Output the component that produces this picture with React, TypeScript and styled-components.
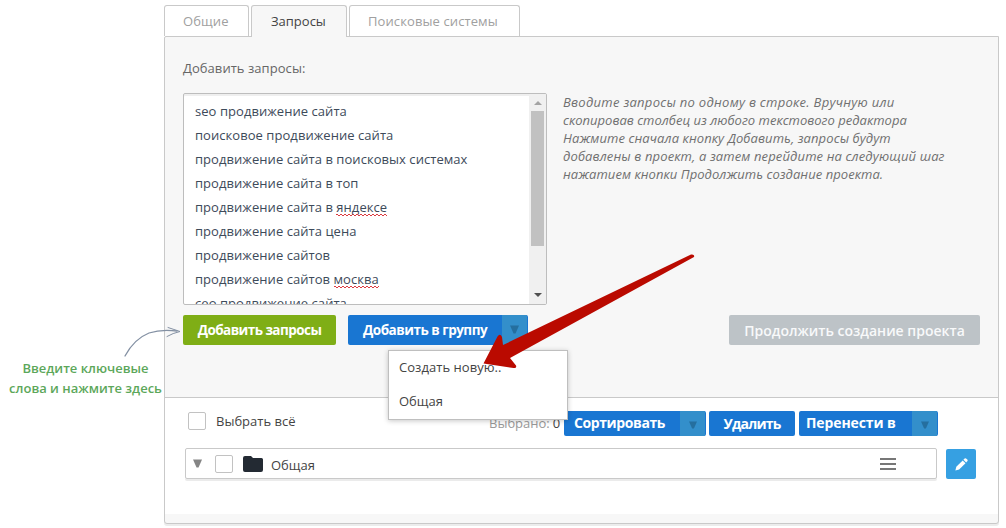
import React from "react";
import styled, { createGlobalStyle } from "styled-components";

const GlobalStyle = createGlobalStyle`
  * { box-sizing: border-box; }
  body {
    margin: 0;
    background: #fff;
    font-family: "Open Sans", "Noto Sans", sans-serif;
    font-size: 13px;
    color: #444;
    overflow: hidden;
  }
`;

const Page = styled.div`
  display: flex;
  width: 1006px;
  height: 528px;
  position: relative;
`;

const Aside = styled.aside`
  width: 164px;
  padding: 358px 0 0 7px;
  flex: none;
  text-align: center;
  font-weight: 600;
  line-height: 20px;
  color: #5ca75a;
`;

const Label = styled.span<{ $spacing?: number }>`
  display: block;
  white-space: nowrap;
  letter-spacing: ${(p) => p.$spacing ?? 0}px;
`;

const Main = styled.main`
  width: 835px;
  padding-top: 5px;
`;

const Tabs = styled.nav`
  display: flex;
  gap: 2px;
  height: 31px;
`;

const Tab = styled.div<{ $width: number; $active?: boolean }>`
  width: ${(p) => p.$width}px;
  height: ${(p) => (p.$active ? 32 : 31)}px;
  border: 1px solid #c9c9c9;
  border-bottom: 0;
  border-radius: 3px 3px 0 0;
  background: ${(p) => (p.$active ? "#f7f7f7" : "#fff")};
  color: ${(p) => (p.$active ? "#444" : "#a0a0a0")};
  line-height: 31px;
  padding-left: ${(p) => (p.$active ? 19 : 18)}px;
  position: relative;
`;

const Panel = styled.section`
  height: 488px;
  border: 1px solid #c9c9c9;
  border-radius: 2px 0 3px 3px;
  box-shadow: 0 2px 0 #ececec;
  background: #f7f7f7;
`;

const AddSection = styled.div`
  height: 361px;
  padding: 22px 18px 0;
  border-bottom: 1px solid #c9c9c9;
`;

const Caption = styled.div`
  height: 34px;
  line-height: 19px;
  color: #666;
`;

const EditorRow = styled.div`
  display: flex;
  gap: 16px;
`;

const Editor = styled.div`
  width: 364px;
  height: 212px;
  flex: none;
  display: flex;
  border: 1px solid #bdbdbd;
  border-radius: 2px;
  background: #fff;
  box-shadow: inset 0 2px 0 #efefef;
  overflow: hidden;
`;

const Lines = styled.div`
  flex: 1;
  padding: 5px 0 0 11px;
  line-height: 24px;
  color: #3d4a5a;
`;

const Misspelled = styled.span`
  background:
    linear-gradient(90deg, #dc3a40 50%, transparent 50%) 0 calc(100% - 1px) / 4px 1px repeat-x,
    linear-gradient(90deg, transparent 50%, #dc3a40 50%) 0 100% / 4px 1px repeat-x;
`;

const Scrollbar = styled.div`
  width: 17px;
  padding: 7px 2px 7px;
  display: flex;
  flex-direction: column;
  align-items: center;
  background: #f0f0f0;
`;

const Thumb = styled.div`
  width: 13px;
  height: 135px;
  margin: 6px 0 auto;
  background: #c1c1c1;
`;

const Hint = styled.p`
  margin: 0;
  font-style: italic;
  line-height: 18px;
  color: #707070;
`;

const ButtonRow = styled.div`
  display: flex;
  margin-top: 10px;
`;

const Button = styled.button<{ $width: number; $tone?: "green" | "grey"; $small?: boolean }>`
  width: ${(p) => p.$width}px;
  height: ${(p) => (p.$small ? 25 : 30)}px;
  flex: none;
  padding: 0;
  border: 0;
  border-radius: 2px;
  overflow: hidden;
  display: flex;
  align-items: center;
  justify-content: center;
  font-family: "Open Sans", "Noto Sans", sans-serif;
  font-size: ${(p) => (p.$tone === "grey" || p.$small ? 14 : 13.5)}px;
  font-weight: ${(p) => (p.$tone === "grey" ? 600 : 700)};
  color: ${(p) => (p.$tone === "grey" ? "#f8f9fa" : "#fff")};
  background: ${(p) =>
    p.$tone === "green" ? "#7fae16" : p.$tone === "grey" ? "#bdc3c7" : "#1976d2"};
`;

const SplitLabel = styled.span<{ $inset: number; $lift?: number }>`
  flex: 1;
  padding-left: ${(p) => p.$inset}px;
  padding-bottom: ${(p) => p.$lift ?? 0}px;
  text-align: left;
`;

const SplitCaret = styled.span<{ $offset?: number }>`
  width: 25px;
  height: 100%;
  margin-right: 1px;
  display: flex;
  align-items: center;
  justify-content: center;
  padding-top: ${(p) => p.$offset ?? 0}px;
  padding-bottom: ${(p) => (p.$offset ? 0 : 2)}px;
  background: #338fcb;
`;

const ListSection = styled.div`
  height: 116px;
  padding: 13px 22px 0 20px;
  background: #fff;
`;

const Toolbar = styled.div`
  display: flex;
  align-items: center;
  height: 25px;
  padding-left: 3px;
`;

const Checkbox = styled.span`
  width: 18px;
  height: 18px;
  flex: none;
  border: 1px solid #c2c2c2;
  border-radius: 2px;
  background: #fff;
`;

const SelectAll = styled.div`
  display: flex;
  gap: 10px;
  width: 301px;
  align-items: center;
  padding-bottom: 6px;
`;

const Selected = styled.div`
  width: 75px;
  display: flex;
  gap: 3px;
  padding-bottom: 2px;
  color: #999;
  b { font-weight: 400; color: #444; }
`;

const Actions = styled.div`
  display: flex;
  gap: 3px;
`;

const GroupRow = styled.div`
  display: flex;
  gap: 9px;
  margin-top: 12px;
  align-items: center;
`;

const Group = styled.div`
  width: 752px;
  height: 31px;
  display: flex;
  align-items: center;
  padding: 0 40px 0 7px;
  border: 1px solid #c9c9c9;
  border-radius: 2px;
  box-shadow: 0 2px 0 #ebebeb;
`;

const GroupName = styled.span`
  flex: 1;
  margin-left: 8px;
  padding-top: 2px;
`;

const Handle = styled.span`
  width: 16px;
  height: 12px;
  border: solid #777;
  border-width: 2px 0;
  display: flex;
  align-items: center;
  &::after { content: ""; width: 100%; height: 2px; background: #777; }
`;

const EditButton = styled.button`
  width: 30px;
  height: 30px;
  margin-top: 1px;
  padding: 0;
  border: 0;
  border-radius: 2px;
  background: #36a0e2;
  display: flex;
  align-items: center;
  justify-content: center;
`;

const Menu = styled.div`
  position: absolute;
  left: 388px;
  top: 350px;
  width: 180px;
  height: 70px;
  border: 1px solid #bfbfbf;
  background: #fff;
  box-shadow: 0 1px 5px rgba(0, 0, 0, 0.22);
`;

const MenuItem = styled.div`
  height: 34px;
  padding-left: 10px;
  line-height: 33px;
  color: #444;
`;

const Overlay = styled.svg`
  position: absolute;
  left: 0;
  top: 0;
  pointer-events: none;
`;

const Caret = ({ color, size = 9 }: { color: string; size?: number }) => (
  <svg width={size} height={size} viewBox="0 0 9 9">
    <path d="M0 0.5H9L5.5 8.5H3.5Z" fill={color} />
  </svg>
);

const queries: { text: string; wrong?: string }[] = [
  { text: "seo продвижение сайта" },
  { text: "поисковое продвижение сайта" },
  { text: "продвижение сайта в поисковых системах" },
  { text: "продвижение сайта в топ" },
  { text: "продвижение сайта в ", wrong: "яндексе" },
  { text: "продвижение сайта цена" },
  { text: "продвижение сайтов" },
  { text: "продвижение сайтов ", wrong: "москва" },
  { text: "сео продвижение сайта" },
];

const hint: { text: string; spacing: number }[] = [
  { text: "Вводите запросы по одному в строке. Вручную или", spacing: 0.29 },
  { text: "скопировав столбец из любого текстового редактора", spacing: 0.02 },
  { text: "Нажмите сначала кнопку Добавить, запросы будут", spacing: 0.1 },
  { text: "добавлены в проект, а затем перейдите на следующий шаг", spacing: 0.13 },
  { text: "нажатием кнопки Продолжить создание проекта.", spacing: 0.06 },
];

export default function App() {
  return (
    <Page>
      <GlobalStyle />
      <Aside>
        <Label>Введите ключевые</Label>
        <Label>слова и нажмите здесь</Label>
      </Aside>
      <Main>
        <Tabs>
          <Tab $width={85}><Label $spacing={0.1}>Общие</Label></Tab>
          <Tab $width={96} $active><Label>Запросы</Label></Tab>
          <Tab $width={171}><Label $spacing={0.1}>Поисковые системы</Label></Tab>
        </Tabs>
        <Panel>
          <AddSection>
            <Caption><Label $spacing={0.05}>Добавить запросы:</Label></Caption>
            <EditorRow>
              <Editor>
                <Lines>
                  {queries.map((q) => (
                    <Label key={q.text + q.wrong} $spacing={0.05}>
                      {q.text}
                      {q.wrong && <Misspelled>{q.wrong}</Misspelled>}
                    </Label>
                  ))}
                </Lines>
                <Scrollbar>
                  <svg width="8" height="4"><path d="M0 4L4 0L8 4Z" fill="#a3a3a3" /></svg>
                  <Thumb />
                  <svg width="8" height="4"><path d="M0 0H8L4 4Z" fill="#505050" /></svg>
                </Scrollbar>
              </Editor>
              <Hint>
                {hint.map((line) => (
                  <Label key={line.text} $spacing={line.spacing}>{line.text}</Label>
                ))}
              </Hint>
            </EditorRow>
            <ButtonRow>
              <Button $width={153} $tone="green"><Label $spacing={-0.55}>Добавить запросы</Label></Button>
              <Button $width={180} style={{ marginLeft: 12 }}>
                <SplitLabel $inset={15}><Label $spacing={-0.5}>Добавить в группу</Label></SplitLabel>
                <SplitCaret><Caret color="#256f9f" /></SplitCaret>
              </Button>
              <Button $width={251} $tone="grey" style={{ marginLeft: "auto" }}>
                <Label>Продолжить создание проекта</Label>
              </Button>
            </ButtonRow>
          </AddSection>
          <ListSection>
            <Toolbar>
              <SelectAll><Checkbox /><Label>Выбрать всё</Label></SelectAll>
              <Selected><Label>Выбрано:</Label><b>0</b></Selected>
              <Actions>
                <Button $width={142} $small>
                  <SplitLabel $inset={10} $lift={2}><Label $spacing={-0.4}>Сортировать</Label></SplitLabel>
                  <SplitCaret $offset={3}><Caret color="#256f9f" size={8} /></SplitCaret>
                </Button>
                <Button $width={86} $small><Label $spacing={-0.8}>Удалить</Label></Button>
                <Button $width={139} $small style={{ marginLeft: 1 }}>
                  <SplitLabel $inset={7} $lift={2}><Label $spacing={-0.1}>Перенести в</Label></SplitLabel>
                  <SplitCaret $offset={3}><Caret color="#256f9f" size={8} /></SplitCaret>
                </Button>
              </Actions>
            </Toolbar>
            <GroupRow>
              <Group>
                <Caret color="#858585" />
                <Checkbox style={{ margin: "0 10px 0 13px" }} />
                <svg width="20" height="16" viewBox="0 0 20 16">
                  <path d="M2 0H8L10 2H18.5Q20 2 20 3.5V14Q20 16 18 16H2Q0 16 0 14V2Q0 0 2 0Z" fill="#232a33" />
                </svg>
                <GroupName><Label>Общая</Label></GroupName>
                <Handle />
              </Group>
              <EditButton>
                <svg width="13" height="13" viewBox="0 0 13 13" fill="#fff">
                  <path d="M1.3 8.8L7.7 2.4L10.5 5.2L4.1 11.6L0.4 12.6Z" />
                  <path d="M8.4 1.7L9.6 0.6Q10.5 -0.1 11.4 0.7L12.3 1.6Q13 2.5 12.3 3.3L11.2 4.5Z" />
                </svg>
              </EditButton>
            </GroupRow>
          </ListSection>
        </Panel>
      </Main>
      <Menu>
        <MenuItem><Label $spacing={0.05}>Создать новую..</Label></MenuItem>
        <MenuItem><Label>Общая</Label></MenuItem>
      </Menu>
      <Overlay width="1006" height="528">
        <path
          d="M483.500 363.500L497.500 336.500Q500 333 502 337L503 345L691 254.500Q695 254 694 257L510 358L516 365.500Q517 368.500 513.500 368Z"
          fill="#ba0a00"
        />
        <g fill="none" stroke="#8390a3" strokeLinecap="round">
          <path d="M125 356Q134 339 149 333Q161 329 177 331" strokeWidth="1.3" />
          <path d="M168 327.500Q174 329.500 180 331.500Q173 333 167 336.500" strokeWidth="1" />
        </g>
      </Overlay>
    </Page>
  );
}
